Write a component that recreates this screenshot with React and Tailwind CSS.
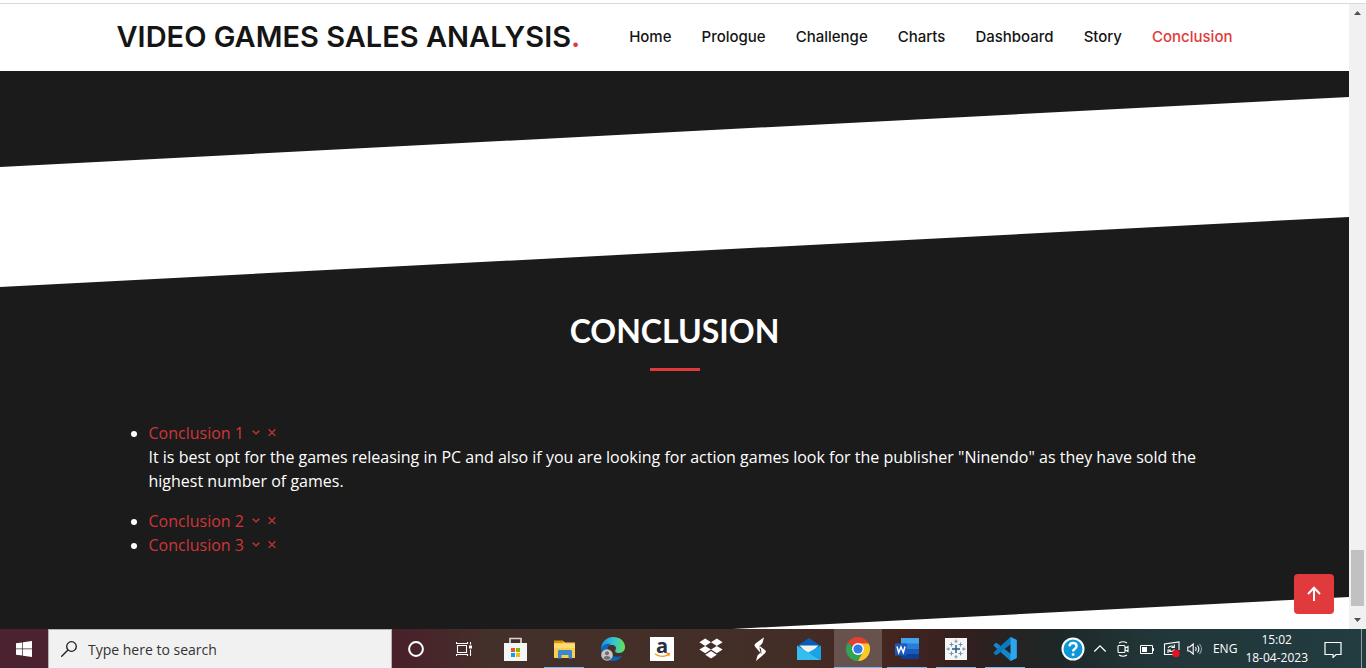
import React, { useState } from "react";

const navItems = ["Home", "Prologue", "Challenge", "Charts", "Dashboard", "Story", "Conclusion"];

const conclusions = [
  {
    title: "Conclusion 1",
    text: 'It is best opt for the games releasing in PC and also if you are looking for action games look for the publisher "Ninendo" as they have sold the highest number of games.',
  },
  { title: "Conclusion 2" },
  { title: "Conclusion 3" },
];

function Header() {
  return (
    <header className="bg-white">
      <div className="mx-auto flex h-[67px] max-w-[1140px] items-center justify-between px-3 pb-0.5">
        <h1 className="font-['Inter',sans-serif] text-[29px] leading-9 font-semibold whitespace-nowrap text-[#151515]">
          VIDEO GAMES SALES ANALYSIS<span className="text-[#e03a3c]">.</span>
        </h1>
        <nav className="flex gap-[30px] font-['Inter',sans-serif] text-[15px] leading-5 font-medium text-[#151515]">
          {navItems.map((n) => (
            <a key={n} href={"#" + n.toLowerCase()} className={n === "Conclusion" ? "text-[#e03a3c]" : ""}>
              {n}
            </a>
          ))}
        </nav>
      </div>
    </header>
  );
}

function ConclusionItem({ title, text }) {
  const [open, setOpen] = useState(Boolean(text));
  return (
    <li>
      <button type="button" onClick={() => setOpen(!open)} className="inline-flex items-center text-[#cf3639]">
        <span>{title}</span>
        <svg viewBox="0 0 8 8" className="ml-2 size-2" fill="none" stroke="currentColor" strokeWidth="1.3">
          <path d="M.7 1.700 4 4.900l3.300-3.200" />
        </svg>
        <svg viewBox="0 0 8 8" className="ml-2 size-2" fill="none" stroke="currentColor" strokeWidth="1.3">
          <path d="m.7.3 6.600 6.600M7.300.3.7 6.900" />
        </svg>
      </button>
      {open && text && <p className="mb-4 text-white">{text}</p>}
    </li>
  );
}

function Scrollbar() {
  return (
    <div className="flex w-[17px] shrink-0 flex-col items-center justify-between bg-[#f1f1f1]" aria-hidden="true">
      <svg viewBox="0 0 17 17" className="h-[17px] w-full" fill="#505050">
        <path d="M5 11h7L8.500 7z" />
      </svg>
      <div className="mt-auto h-14 w-[13px] bg-[#c1c1c1]" />
      <svg viewBox="0 0 17 17" className="mt-1.5 h-[17px] w-full" fill="#505050">
        <path d="M5 6h7l-3.500 4z" />
      </svg>
    </div>
  );
}

const icons = {
  store: (
    <svg viewBox="0 0 24 24" className="size-6">
      <path d="M7 8V1.500h11V8" fill="none" stroke="#d5d5d5" strokeWidth="1.7" />
      <path d="M1 6h23v18H1z" fill="#f5f5f5" />
      <path d="M8 11h4v4H8z" fill="#f25022" />
      <path d="M13 11h4v4h-4z" fill="#7fba00" />
      <path d="M8 16h4v4H8z" fill="#00a4ef" />
      <path d="M13 16h4v4h-4z" fill="#ffb900" />
    </svg>
  ),
  explorer: (
    <svg viewBox="0 0 24 24" className="size-6">
      <path d="M2 4h9l2 1.500h10V21H2z" fill="#f9ce50" />
      <path d="M2 3.500h9V6H2z" fill="#dc9700" />
      <path d="M2 7h21v4H2z" fill="#ffdb73" />
      <path d="M6 21.500V14.300q0-1.300 1.300-1.300h11.400q1.300 0 1.300 1.300v7.200h-3.500V18h-7v3.500z" fill="#3987cf" />
    </svg>
  ),
  edge: (
    <svg viewBox="0 0 24 24" className="size-6">
      <defs>
        <linearGradient id="edgeTop" x1="0" x2="1">
          <stop offset="0" stopColor="#1b8edb" />
          <stop offset=".5" stopColor="#2fc2dc" />
          <stop offset="1" stopColor="#66e34f" />
        </linearGradient>
      </defs>
      <path d="M0 11C1 4 6 0 12 0c7 0 12 4 12 10 0 4-3 6-6.500 6-3 0-4-1-3-3 1.500-3-.5-5-4-5C6 8 2 10 0 14z" fill="url(#edgeTop)" />
      <path d="M0 12c1-4 6-6 10-5-3 1-4 4-3 7 1 4 6 7 14 5-2 3-5 5-9 5C5 24 0 19 0 12z" fill="#0e65b8" />
      <circle cx="6" cy="18" r="5.8" fill="#c9c7c5" />
      <circle cx="6" cy="16.3" r="2" fill="#706d6b" />
      <path d="M2.500 21.500q0-2.500 3.500-2.500t3.500 2.500q-3.500 2.500-7 0z" fill="#706d6b" />
    </svg>
  ),
  amazon: (
    <span className="relative flex size-6 justify-center bg-white font-['Open_Sans',sans-serif] text-[20px] leading-[18px] font-bold text-[#232f3e]">
      a
      <svg viewBox="0 0 24 24" className="absolute inset-0 size-6" fill="none" stroke="#f7981d" strokeWidth="1.3">
        <path d="M5 17c4 3 10 3 13.500.5M16.500 16.500h3q0 1.500-1 2.500" />
      </svg>
    </span>
  ),
  dropbox: (
    <svg viewBox="0 0 24 24" className="size-6" fill="#fff">
      <path d="m6.200 1.500 5.800 3.700-5.800 3.700L.4 5.200zM17.800 1.500l5.800 3.700-5.800 3.700L12 5.200zM6.200 8.900l5.800 3.700-5.800 3.700-5.800-3.700zM17.800 8.900l5.800 3.700-5.800 3.700-5.800-3.700zM12 14l5.800 3.700-5.800 3.700-5.800-3.700z" />
    </svg>
  ),
  bolt: (
    <svg viewBox="0 0 24 24" className="size-6" fill="#fff">
      <path d="M16 .3 7.500 6.500q-1.500 1.200-.6 3l6.600 7.500-.5-5-2-2 3.500-4zM11 8.500l6.500 5q.8 1.500-.5 2.800L8 24l1.500-5.500 3-3z" />
    </svg>
  ),
  mail: (
    <svg viewBox="0 0 24 24" className="size-6">
      <path d="M0 9 12 1l12 8-12 8z" fill="#0a5cb5" />
      <path d="M2.500 8.500h19L12 18z" fill="#f1f1f1" />
      <path d="m0 8.500 24 14.500H0z" fill="#35bdf0" />
      <path d="M24 8.500v14.500L11 15.500z" fill="#1ba3e8" />
    </svg>
  ),
  chrome: (
    <svg viewBox="0 0 24 24" className="size-6">
      <path d="M12 12 1.600 6A12 12 0 0 1 22.400 6z" fill="#e53f32" />
      <path d="M12 12h-.5L1.600 6A12 12 0 0 0 12 24l5-9z" fill="#34a351" />
      <path d="M12 6.500h10.700A12 12 0 0 1 12 24l5-9z" fill="#fcc729" />
      <circle cx="12" cy="12" r="6" fill="#fff" />
      <circle cx="12" cy="12" r="4.6" fill="#2f7be8" />
    </svg>
  ),
  word: (
    <svg viewBox="0 0 24 24" className="size-6">
      <path d="M6 1h18v6H6z" fill="#41a5ee" />
      <path d="M6 6.500h18V12H6z" fill="#2b7cd3" />
      <path d="M6 12h18v5.500H6z" fill="#185abd" />
      <path d="M6 17h18v5H6z" fill="#103f91" />
      <path d="M0 6.500h12v12H0z" fill="#185abd" />
      <path d="m2 9.500 1.700 6L6 10l2.300 5.500 1.700-6" fill="none" stroke="#fff" strokeWidth="1.5" />
    </svg>
  ),
  tableau: (
    <svg viewBox="0 0 24 24" className="size-6">
      <path d="M1 1h22v22H1z" fill="#f5f5f5" />
      <g fill="none" stroke="#6b95ab" strokeWidth="1">
        <path d="M12 8v8M8 12h8" stroke="#1d5a80" strokeWidth="1.4" />
        <path d="M12 2.500v3.500M10.500 4.200h3M12 18v3.500M10.500 19.800h3M2.500 12H6M4.200 10.500v3M18 12h3.500M19.800 10.500v3M7.500 5.500v4M5.500 7.500h4M16.500 5.500v4M14.500 7.500h4M7.500 14.500v4M5.500 16.500h4M16.500 14.500v4M14.500 16.500h4" />
      </g>
    </svg>
  ),
  vscode: (
    <svg viewBox="0 0 24 24" className="size-6">
      <path d="m17.500 0 6.200 2.900v18.200L17.500 24 1 8.900q-.8-.8 0-1.500l1.500-1.300q.6-.4 1.300 0L18 17V7z" fill="#1686cc" />
      <path d="M17.500 0 1 15.100q-.8.8 0 1.500l1.500 1.300q.6.400 1.300 0L18 7z" fill="#087bc0" />
      <path d="m17.500 0 6.200 2.900v18.200L17.500 24z" fill="#2aa5ee" />
    </svg>
  ),
};

const apps = [
  { id: "store", label: "Microsoft Store" },
  { id: "explorer", label: "File Explorer", running: true },
  { id: "edge", label: "Microsoft Edge" },
  { id: "amazon", label: "Amazon" },
  { id: "dropbox", label: "Dropbox" },
  { id: "bolt", label: "Shortcut" },
  { id: "mail", label: "Mail" },
  { id: "chrome", label: "Google Chrome", active: true },
  { id: "word", label: "Word", running: true },
  { id: "tableau", label: "Tableau", running: true },
  { id: "vscode", label: "Visual Studio Code", running: true },
];

function AppButton({ id, label, running, active }) {
  return (
    <button
      type="button"
      aria-label={label}
      className={"relative flex w-12 items-center justify-center " + (active ? "bg-[#68524e]" : "")}
    >
      {icons[id]}
      {(running || active) && (
        <span className={"absolute bottom-0 h-px bg-[#76b9ed] " + (active ? "inset-x-0" : "inset-x-1")} />
      )}
    </button>
  );
}

function Tray() {
  return (
    <div className="ml-auto flex shrink-0 items-center text-white">
      <button type="button" aria-label="Help" className="mr-2">
        <svg viewBox="0 0 24 24" className="size-6" fill="none">
          <circle cx="12" cy="12" r="10.5" fill="#0d96d8" stroke="#fff" strokeWidth="2" />
          <path d="M8.500 9.300q.3-3.300 3.600-3.300t3.500 3q0 1.700-1.900 2.900-1.600 1-1.600 2.600" stroke="#fff" strokeWidth="2.4" />
          <path d="M10.800 16.300h2.600v2.400h-2.600z" fill="#fff" />
        </svg>
      </button>
      <button type="button" aria-label="Show hidden icons" className="mr-2">
        <svg viewBox="0 0 14 14" className="h-3.5 w-3.5" fill="none" stroke="currentColor" strokeWidth="1.3">
          <path d="m1.300 9.500 5.700-5.700 5.700 5.700" />
        </svg>
      </button>
      <button type="button" aria-label="Meet now" className="mr-2">
        <svg viewBox="0 0 16 16" className="size-4" fill="none" stroke="currentColor" strokeWidth="1.1">
          <path d="M3 5.500q0-1 1-1h5q1 0 1 1v5q0 1-1 1H4q-1 0-1-1zM10 7.200l3-1.700v5L10 8.800M4 2q4-2.500 8 0M4 14q4 2.500 8 0" />
        </svg>
      </button>
      <button type="button" aria-label="Battery" className="mr-2">
        <svg viewBox="0 0 16 16" className="size-4" fill="none" stroke="currentColor">
          <path d="M1.500 4.500h12v8h-12zM14.500 7v3" />
          <path d="M3 6h5v5H3z" fill="currentColor" stroke="none" />
        </svg>
      </button>
      <button type="button" aria-label="Updates" className="mr-1.5">
        <svg viewBox="0 0 18 18" className="h-[18px] w-[18px]" fill="none" stroke="currentColor" strokeWidth="1.1">
          <path d="M10 14.500H1.500V4l14.500-2v8M5 8q2-3 5.500-1.500M11.300 4.500v3h-3M5 13v-3h3M11.500 9.500q-2 3-5.500 1.500" />
          <circle cx="13" cy="13.5" r="3.7" fill="#e81123" stroke="none" />
        </svg>
      </button>
      <button type="button" aria-label="Volume" className="mr-2.5">
        <svg viewBox="0 0 16 16" className="size-4" fill="none" stroke="currentColor" strokeWidth="1.1">
          <path d="M.8 6h2l3.400-3v10L2.800 10h-2zM8.500 6q1.500 2 0 4M10.500 4.500q2.700 3.500 0 7" />
          <path d="M12.500 3q4 5 0 10" opacity=".5" />
        </svg>
      </button>
      <button type="button">ENG</button>
      <button type="button" className="ml-2 text-center leading-[18px]">
        15:02
        <br />
        18-04-2023
      </button>
      <button type="button" aria-label="Notifications" className="ml-4">
        <svg viewBox="0 0 18 18" className="h-[18px] w-[18px]" fill="none" stroke="currentColor" strokeWidth="1.2">
          <path d="M1 2.500h16v12h-5l-3 3v-3H1z" />
        </svg>
      </button>
      <span className="ml-[19px] h-[39px] w-px bg-white/50" />
      <span className="w-1" />
    </div>
  );
}

function Taskbar() {
  return (
    <footer className="flex h-[39px] shrink-0 bg-[linear-gradient(90deg,#4b2230_0%,#49202a_29%,#44302a_36%,#432d27_58%,#45241f_66%,#30201f_71%,#1e2626_77%,#213638_84%,#223c40_100%)] font-['Open_Sans',sans-serif] text-[12px]">
      <button type="button" aria-label="Start" className="flex w-12 shrink-0 items-center justify-center">
        <svg viewBox="0 0 16 16" className="size-4" fill="#fff">
          <path d="M0 2.300 6.300 1.400v6.200H0zM7 1.300 16 0v7.600H7zM0 8.300h6.300v6.200L0 13.700zM7 8.300h9V16l-9-1.300z" />
        </svg>
      </button>
      <label className="flex w-[344px] min-w-0 items-center border border-b-0 border-[#b9aeb1] bg-[#f1f1f1] pl-3">
        <svg viewBox="0 0 16 16" className="size-4 shrink-0" fill="none" stroke="#1c1c1c" strokeWidth="1.3">
          <circle cx="10.5" cy="5.5" r="4.8" />
          <path d="M7 9 .3 15.700" />
        </svg>
        <input
          type="text"
          aria-label="Search"
          placeholder="Type here to search"
          className="ml-[11px] min-w-0 flex-1 bg-transparent text-[14px] outline-none placeholder:text-[#333]"
        />
      </label>
      <button type="button" aria-label="Cortana" className="flex w-12 shrink-0 items-center justify-center">
        <svg viewBox="0 0 16 16" className="size-4" fill="none" stroke="#fff" strokeWidth="2">
          <circle cx="8" cy="8" r="6.9" />
        </svg>
      </button>
      <button type="button" aria-label="Task view" className="flex w-12 shrink-0 items-center justify-center">
        <svg viewBox="0 0 16 16" className="size-4" fill="none" stroke="#fff" strokeWidth="1.1">
          <path d="M1.500 4.500h9v7h-9zM.5 1v1.500h11V1M.5 15v-1.500h11V15M14.500 1v2.500M14.500 8.500V15" />
          <path d="M13 4.500h3v3h-3z" fill="#fff" stroke="none" />
        </svg>
      </button>
      <div className="ml-[3px] flex shrink-0 gap-px">
        {apps.map((a) => (
          <AppButton key={a.id} {...a} />
        ))}
      </div>
      <Tray />
    </footer>
  );
}

export default function App() {
  return (
    <div className="flex h-screen flex-col overflow-hidden bg-white">
      <div className="h-1 shrink-0 border-b border-[#dadada]" />
      <div className="flex min-h-0 flex-1">
        <div className="relative flex min-w-0 flex-1 flex-col overflow-hidden bg-[#1b1b1b]">
          <Header />
          <main>
            <div className="mt-[26px] h-[190px] bg-white [clip-path:polygon(0_70px,100%_0,100%_calc(100%_-_70px),0_100%)]" />
            <section
              id="conclusion"
              className="mx-auto max-w-[1140px] px-3 pt-6 font-['Open_Sans',sans-serif] text-white"
            >
              <h2 className="text-center font-['Lato',sans-serif] text-[32px] leading-10 font-bold">CONCLUSION</h2>
              <div className="mx-auto mt-[17px] h-[3px] w-[50px] bg-[#e03a3c]" />
              <ul className="mt-[50px] mb-10 list-disc pl-8 text-[16px] leading-6">
                {conclusions.map((c) => (
                  <ConclusionItem key={c.title} {...c} />
                ))}
              </ul>
            </section>
            <div className="h-[70px] bg-white [clip-path:polygon(0_100%,100%_0,100%_100%)]" />
          </main>
          <button
            type="button"
            aria-label="Back to top"
            className="absolute right-[15px] bottom-[15px] flex size-10 items-center justify-center rounded bg-[#e03a3c]"
          >
            <svg viewBox="0 0 16 16" className="size-4" fill="none" stroke="#fff" strokeWidth="2">
              <path d="M8 15V2M2 8l6-6.200L14 8" />
            </svg>
          </button>
        </div>
        <Scrollbar />
      </div>
      <Taskbar />
    </div>
  );
}
